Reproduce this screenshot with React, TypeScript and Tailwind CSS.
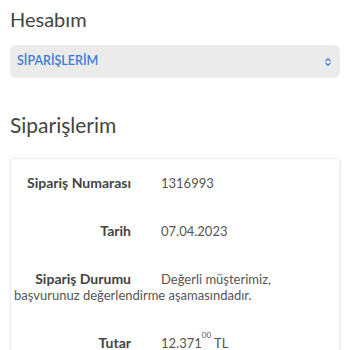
import { ChevronsUpDown } from "lucide-react";

const rows = [
  { label: "Sipariş Numarası", value: <>1316993</> },
  { label: "Tarih", value: <>07.04.2023</> },
  { label: "Sipariş Durumu", value: <>Değerli müşterimiz, başvurunuz değerlendirme aşamasındadır.</> },
  {
    label: "Tutar",
    value: (
      <>
        12.371<sup className="text-[8px] align-[6px]">00</sup> TL
      </>
    ),
  },
];

export default function App() {
  return (
    <div className="h-[350px] overflow-hidden bg-white px-[10px] pt-[6px] font-['Lato',sans-serif] text-[#444]">
      <h1 className="text-[20px] leading-[26px] font-normal text-[#444]">Hesabım</h1>

      <div className="mt-[13px] flex h-[33px] items-center justify-between rounded-[6px] bg-[#ebebeb] pl-[7px] pr-[7px]">
        <span className="text-[12.5px] font-semibold text-[#3d7bd9]">SİPARİŞLERİM</span>
        <ChevronsUpDown className="h-[10px] w-[10px] text-[#3d7bd9]" strokeWidth={3} />
      </div>

      <h2 className="mt-[33px] text-[21px] leading-[28px] font-normal text-[#444]">Siparişlerim</h2>

      <div className="mt-[19px] rounded-[2px] border border-[#f0f0f0] px-[3px] pt-[16px] pb-4 shadow-[1px_1px_3px_rgba(0,0,0,0.08)]">
        {rows.map((r) => (
          <p key={r.label} className="mb-[32px] text-[13px] leading-[16px] text-[#555]">
            <span className="inline-block w-[117px] text-right text-[14px] font-bold text-[#444]">{r.label}</span>
            <span className="ml-[30px]">{r.value}</span>
          </p>
        ))}
      </div>
    </div>
  );
}
